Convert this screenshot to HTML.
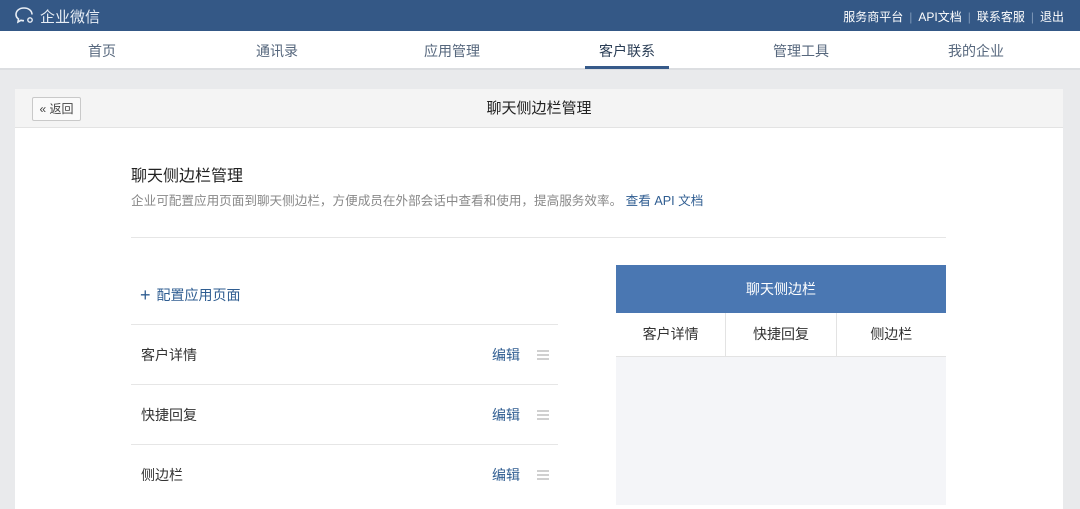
<!DOCTYPE html><html><head><meta charset="utf-8"><style>
*{margin:0;padding:0;box-sizing:border-box}
body{width:1080px;height:502px;overflow:hidden;background:#e9eaec;font-family:"Liberation Sans","Noto Sans CJK SC",sans-serif;position:relative}
.top{position:absolute;left:0;top:0;width:1080px;height:31px;background:#345886;color:#fff}
.logo{position:absolute;left:40px;top:6px;font-size:15px;color:#e8eef5}
.tr{position:absolute;right:16px;top:8px;font-size:12px;color:#fff}
.tr span.s{color:#7d97b8;margin:0 6px}
.nav{position:absolute;left:0;top:31px;width:1080px;height:39px;background:#fff;border-bottom:2px solid #dcdee1}
.nav a{position:absolute;top:10px;font-size:14px;color:#56677d;width:120px;text-align:center;margin-left:-60px}
.nav .act{color:#2a3d55}
.ul{position:absolute;left:585px;top:66px;width:84px;height:3px;background:#365a8a}
.card{position:absolute;left:15px;top:89px;width:1048px;height:420px;background:#fff}
.ch{height:39px;background:#f4f4f4;border-bottom:1px solid #e3e3e3;text-align:center;font-size:15px;line-height:39px;color:#222}
.back{position:absolute;left:17px;top:8px;width:49px;height:24px;border:1px solid #c9c9c9;border-radius:2px;background:#fafafa;font-size:12px;line-height:22px;color:#444;text-align:center}
.abs{position:absolute}
.row{position:absolute;left:131px;width:427px;height:60px;border-top:1px solid #e6e6e6;font-size:14px;color:#333}
.row .t{position:absolute;left:10px;top:20px}
.row .e{position:absolute;left:361px;top:20px;color:#2f5d91}
.row .h{position:absolute;left:406px;top:25px;width:12px;height:2px;background:#d0d0d0;box-shadow:0 4px 0 #d0d0d0,0 8px 0 #d0d0d0}
</style></head><body>
<div class="top">
<svg class="abs" style="left:14px;top:6px" width="24" height="20" viewBox="0 0 24 20"><path d="M10 2C5 2 2 5 2 8.5c0 2 1 3.5 2.5 4.5L4 16l3-1.7c1 .3 2 .4 3 .4" fill="none" stroke="#e8eef5" stroke-width="1.6"/><path d="M10 2c5 0 8 3 8 6.5" fill="none" stroke="#e8eef5" stroke-width="1.6"/><circle cx="16" cy="14" r="2.2" fill="none" stroke="#e8eef5" stroke-width="1.4"/></svg>
<div class="logo">企业微信</div>
<div class="tr">服务商平台<span class="s">|</span>API文档<span class="s">|</span>联系客服<span class="s">|</span>退出</div>
</div>
<div class="nav">
<a style="left:102px">首页</a><a style="left:277px">通讯录</a><a style="left:452px">应用管理</a><a class="act" style="left:627px">客户联系</a><a style="left:801px">管理工具</a><a style="left:976px">我的企业</a>
</div>
<div class="ul"></div>
<div class="card"><div class="ch">聊天侧边栏管理</div><div class="back">« 返回</div></div>
<div class="abs" style="left:131px;top:162px;font-size:16px;color:#222">聊天侧边栏管理</div>
<div class="abs" style="left:131px;top:190px;font-size:12.6px;color:#888">企业可配置应用页面到聊天侧边栏，方便成员在外部会话中查看和使用，提高服务效率。 <span style="color:#2f5d91">查看 API 文档</span></div>
<div class="abs" style="left:131px;top:237px;width:815px;height:1px;background:#e6e6e6"></div>
<div class="abs" style="left:140px;top:284px;font-size:14px;color:#2f5d91"><span style="font-size:18px;margin-right:6px;position:relative;top:1px">+</span>配置应用页面</div>
<div class="row" style="top:324px"><span class="t">客户详情</span><span class="e">编辑</span><span class="h"></span></div>
<div class="row" style="top:384px"><span class="t">快捷回复</span><span class="e">编辑</span><span class="h"></span></div>
<div class="row" style="top:444px"><span class="t">侧边栏</span><span class="e">编辑</span><span class="h"></span></div>
<div class="abs" style="left:616px;top:265px;width:330px;height:240px;background:#f4f5f8">
<div style="height:48px;background:#4a77b2;color:#fff;font-size:14px;text-align:center;line-height:48px">聊天侧边栏</div>
<div style="display:flex;height:44px;background:#fff;border-bottom:1px solid #e3e3e3;font-size:14px;color:#333;line-height:43px;text-align:center">
<div style="flex:1;border-right:1px solid #e3e3e3">客户详情</div><div style="flex:1;border-right:1px solid #e3e3e3">快捷回复</div><div style="flex:1">侧边栏</div></div>
</div>
</body></html>
